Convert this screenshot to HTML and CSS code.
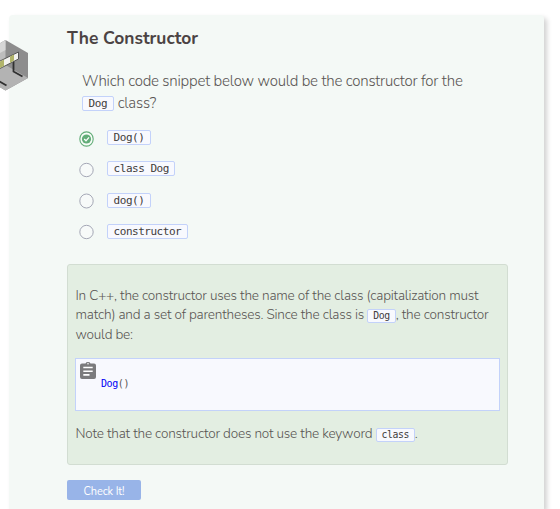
FILE: index.html
```html
<!DOCTYPE html>
<html lang="en">
<head>
<meta charset="utf-8">
<title>The Constructor</title>
<link rel="stylesheet" href="styles.css">
</head>
<body>
<main class="card">
  <svg class="badge" width="28" height="52" viewBox="0 0 28 52">
    <path d="M5.500 0L28 13V38L5.500 50.500L-16 38V13Z" fill="#8d8d8d"/>
    <path d="M-16 13L5.500 0V27L-16 38Z" fill="#bdbdbd"/>
    <path d="M-4 6L5.500 0V10L-4 15Z" fill="#d6d6d6"/>
    <path d="M-16 38L5.500 25L28 38L5.500 50.500Z" fill="#b3b3b3"/>
    <path d="M13.500 20V31.500L22.500 36.500M-2 40.500L6.500 45.500" fill="none" stroke="#303030" stroke-width="1.800"/>
    <path d="M-1 21.500L18.500 12V19L-1 29Z" fill="#f3f3ef" stroke="#555" stroke-width="1"/>
    <path d="M0 21.500L4 19.500V26L0 28ZM10 16.500L14 14.500V20.500L10 23Z" fill="#b1b46a"/>
  </svg>
  <h1 class="title">The Constructor</h1>
  <div class="question">
    <div class="q1">Which code snippet below would be the constructor for the</div>
    <div class="q2"><code class="chip">Dog</code><span class="q2-text">class?</span></div>
  </div>
  <div class="options">
    <div class="option"><svg class="radio" width="15" height="16" viewBox="0 0 15 16"><ellipse cx="7.500" cy="8" rx="6.700" ry="7.100" fill="#f8fcf8" stroke="#62ad78" stroke-width="1.100"/><circle cx="7.500" cy="8" r="4.600" fill="#62ad78"/><path d="M5.200 8L7 9.800L10 6.300" fill="none" stroke="#fff" stroke-width="1.300"/></svg><code class="chip">Dog()</code></div>
    <div class="option"><svg class="radio" width="15" height="16" viewBox="0 0 15 16"><circle cx="7.500" cy="8" r="6.700" fill="#f7faf9" stroke="#a5a8b6"/></svg><code class="chip">class Dog</code></div>
    <div class="option"><svg class="radio" width="15" height="16" viewBox="0 0 15 16"><ellipse cx="7.500" cy="8" rx="6.700" ry="7" fill="#f7faf9" stroke="#a5a8b6"/></svg><code class="chip">dog()</code></div>
    <div class="option"><svg class="radio" width="15" height="16" viewBox="0 0 15 16"><circle cx="7.500" cy="8" r="6.700" fill="#f7faf9" stroke="#a5a8b6"/></svg><code class="chip">constructor</code></div>
  </div>
  <section class="feedback">
    <div class="line">In C++, the constructor uses the name of the class (capitalization must</div>
    <div class="line">match) and a set of parentheses. Since the class is <code class="chip small">Dog</code>, the constructor</div>
    <div class="line">would be:</div>
    <div class="snippet">
      <svg width="16" height="18" viewBox="0 0 16 18"><path d="M2 1.500H5.500A2.600 2 0 0 1 10.500 1.500H14Q16 1.500 16 3.500V15Q16 17 14 17H2Q0 17 0 15V3.500Q0 1.500 2 1.500Z" fill="#7b7b7d"/><path d="M3.300 5.500H12.700M3.300 9.200H12.700M3.300 12.900H9.500" stroke="#fff" stroke-width="1.600"/><circle cx="8" cy="1.800" r=".8" fill="#fff"/></svg>
      <code class="source"><span class="name">Dog</span>()</code>
    </div>
    <div class="line">Note that the constructor does not use the keyword <code class="chip small">class</code>.</div>
  </section>
  <button class="check">Check It!</button>
</main>
</body>
</html>
```
FILE: styles.css
```css
* { box-sizing: border-box; }
body {
  margin: 0;
  height: 509px;
  overflow: hidden;
  background: #fff;
  font-family: Nunito, Lato, sans-serif;
  font-weight: 300;
  color: #595553;
}
.card {
  position: relative;
  width: 535px;
  height: 494px;
  margin: 15px 0 0 9px;
  padding: 11px 36px 0 58px;
  background: #f4f9f6;
  border-radius: 4px 4px 0 0;
  box-shadow: 3px 3px 5px rgba(0, 0, 0, .18);
}
.badge { position: absolute; left: -9px; top: 25px; }
.title {
  margin: 0;
  height: 24px;
  font-size: 17.400px;
  line-height: 24px;
  font-weight: 700;
  color: #4b4343;
  white-space: nowrap;
}
.question {
  padding: 20px 0 0 15px;
  font-size: 15px;
  letter-spacing: -.210px;
  line-height: 22px;
  white-space: nowrap;
}
.q2 { display: flex; align-items: center; height: 23px; }
.q2-text { margin: -2px 0 0 4px; }
.chip {
  display: inline-block;
  height: 15px;
  padding: 0 5.600px;
  border: 1px solid #c3d2fa;
  border-radius: 2px;
  background: #f8f9fe;
  font: 400 11px/13px "DejaVu Sans Mono", monospace;
  letter-spacing: -.480px;
  color: #403b3b;
}
.options { padding: 15px 0 0 12.500px; }
.option { display: flex; align-items: flex-start; height: 31.300px; }
.option .radio { margin: .500px 13px 0 -.500px; }
.feedback {
  width: 441px;
  height: 201px;
  margin-top: 8.400px;
  padding: 20px 7.500px 0;
  border: 1px solid #d2ddd2;
  border-radius: 3px;
  background: #e3eee2;
}
.line {
  position: relative;
  top: 1px;
  height: 19.500px;
  font-size: 13.600px;
  letter-spacing: -.210px;
  line-height: 19.500px;
  white-space: nowrap;
}
.small { height: 14px; padding: 0 5px; font-size: 9.800px; line-height: 12px; letter-spacing: -.450px; }
.snippet {
  display: flex;
  align-items: flex-start;
  width: 425px;
  height: 53px;
  margin: 15px 0 12px -.500px;
  padding: 3px 4px;
  border: 1px solid #c3d2fa;
  background: #f8f9fe;
}
.source {
  margin: 15px 0 0 5px;
  font: 400 10px/13px "DejaVu Sans Mono", monospace;
  letter-spacing: -.420px;
}
.name { color: #0000f5; }
.check {
  display: block;
  width: 74px;
  height: 20px;
  margin-top: 15px;
  padding: 3px 0 0;
  border: 0;
  border-radius: 2px;
  background: #98b4e8;
  color: #fff;
  font: 400 11px/17px Nunito, Lato, sans-serif;
  letter-spacing: -.150px;
}
```
